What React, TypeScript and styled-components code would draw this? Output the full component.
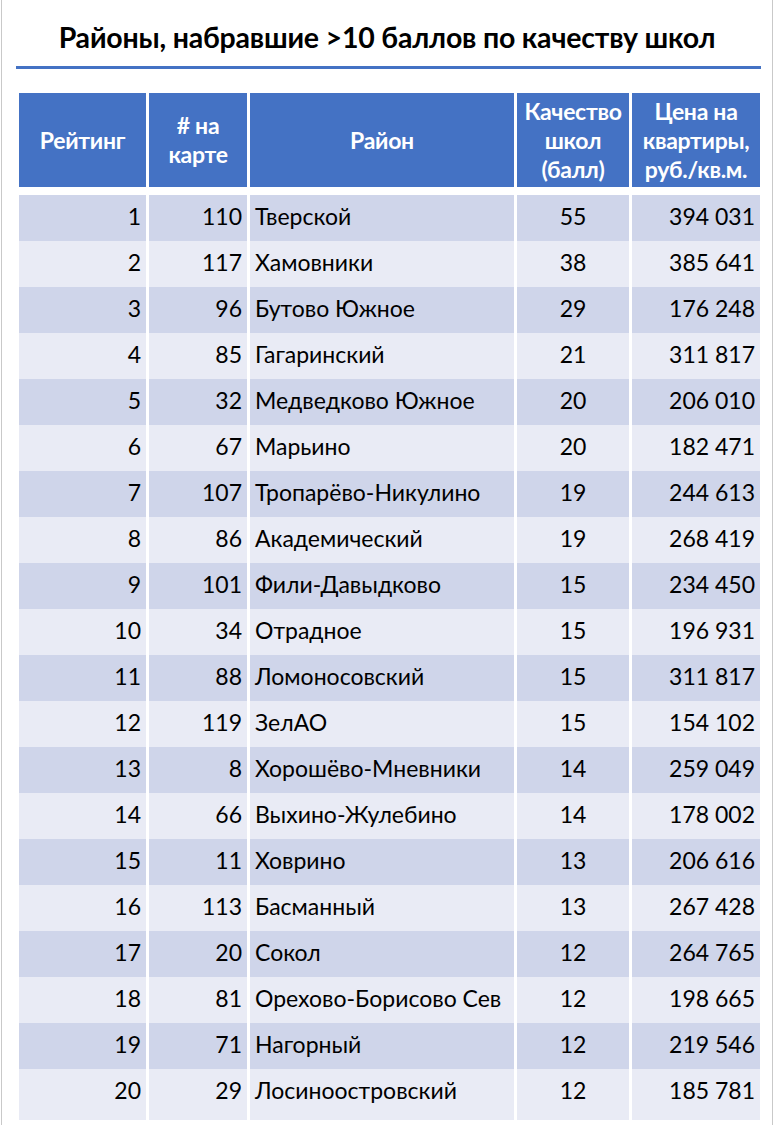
import React from "react";
import styled, { createGlobalStyle } from "styled-components";

const GlobalStyle = createGlobalStyle`
  html, body {
    margin: 0;
    padding: 0;
    background: #fff;
  }
  body {
    font-family: Lato, "Noto Sans", "Liberation Sans", sans-serif;
    color: #000;
  }
`;

const COLS = "127px 98px 264px 112px 128px";

const Frame = styled.div`
  box-sizing: border-box;
  width: 772px;
  min-height: 1125px;
  margin-left: 1px;
  border-left: 1px solid #c9c9c9;
  border-right: 1px solid #c9c9c9;
  padding-top: 21px;
`;

const Title = styled.h1`
  margin: 0;
  height: 32px;
  line-height: 32px;
  text-align: center;
  font-size: 28.5px;
  font-weight: 700;
  letter-spacing: -0.2px;
`;

const Rule = styled.div`
  margin: 13px 0 0 14px;
  width: 745px;
  height: 3px;
  background: #4472c4;
`;

const Table = styled.div`
  margin: 24px 0 0 17px;
  display: flex;
  flex-direction: column;
  gap: 3px;
`;

const Row = styled.div<{ $head?: boolean }>`
  display: grid;
  grid-template-columns: ${COLS};
  column-gap: 3px;
  height: ${(p) => (p.$head ? "94px" : "43px")};
  margin-bottom: ${(p) => (p.$head ? "5px" : "0")};
`;

const HeadCell = styled.div`
  background: #4472c4;
  color: #fff;
  font-weight: 700;
  font-size: 23px;
  line-height: 29px;
  letter-spacing: -0.3px;
  display: flex;
  align-items: center;
  justify-content: center;
  text-align: center;
  padding: 0 1px;
  white-space: nowrap;
`;

const Cell = styled.div<{ $odd: boolean; $align: "left" | "right" | "center"; $lift?: boolean }>`
  background: ${(p) => (p.$odd ? "#cfd5ea" : "#e9ebf5")};
  font-size: 23px;
  line-height: 43px;
  text-align: ${(p) => p.$align};
  padding: 0 5px;
  padding-bottom: ${(p) => (p.$lift ? "8px" : "0")};
  box-sizing: border-box;
  white-space: nowrap;
`;

type Item = [number, number, string, number, string];

const rows: Item[] = [
  [1, 110, "Тверской", 55, "394 031"],
  [2, 117, "Хамовники", 38, "385 641"],
  [3, 96, "Бутово Южное", 29, "176 248"],
  [4, 85, "Гагаринский", 21, "311 817"],
  [5, 32, "Медведково Южное", 20, "206 010"],
  [6, 67, "Марьино", 20, "182 471"],
  [7, 107, "Тропарёво-Никулино", 19, "244 613"],
  [8, 86, "Академический", 19, "268 419"],
  [9, 101, "Фили-Давыдково", 15, "234 450"],
  [10, 34, "Отрадное", 15, "196 931"],
  [11, 88, "Ломоносовский", 15, "311 817"],
  [12, 119, "ЗелАО", 15, "154 102"],
  [13, 8, "Хорошёво-Мневники", 14, "259 049"],
  [14, 66, "Выхино-Жулебино", 14, "178 002"],
  [15, 11, "Ховрино", 13, "206 616"],
  [16, 113, "Басманный", 13, "267 428"],
  [17, 20, "Сокол", 12, "264 765"],
  [18, 81, "Орехово-Борисово Сев", 12, "198 665"],
  [19, 71, "Нагорный", 12, "219 546"],
  [20, 29, "Лосиноостровский", 12, "185 781"],
];

export default function App() {
  return (
    <>
      <GlobalStyle />
      <Frame>
        <Title>Районы, набравшие &gt;10 баллов по качеству школ</Title>
        <Rule />
        <Table>
          <Row $head>
            <HeadCell>Рейтинг</HeadCell>
            <HeadCell>
              # на
              <br />
              карте
            </HeadCell>
            <HeadCell>Район</HeadCell>
            <HeadCell>
              Качество
              <br />
              школ
              <br />
              (балл)
            </HeadCell>
            <HeadCell>
              Цена на
              <br />
              квартиры,
              <br />
              руб./кв.м.
            </HeadCell>
          </Row>
          {rows.map(([rank, num, name, score, price], i) => {
            const odd = i % 2 === 0;
            return (
              <Row key={rank}>
                <Cell $odd={odd} $align="right" $lift>
                  {rank}
                </Cell>
                <Cell $odd={odd} $align="right" $lift>
                  {num}
                </Cell>
                <Cell $odd={odd} $align="left">
                  {name}
                </Cell>
                <Cell $odd={odd} $align="center">
                  {score}
                </Cell>
                <Cell $odd={odd} $align="right">
                  {price}
                </Cell>
              </Row>
            );
          })}
        </Table>
      </Frame>
    </>
  );
}
